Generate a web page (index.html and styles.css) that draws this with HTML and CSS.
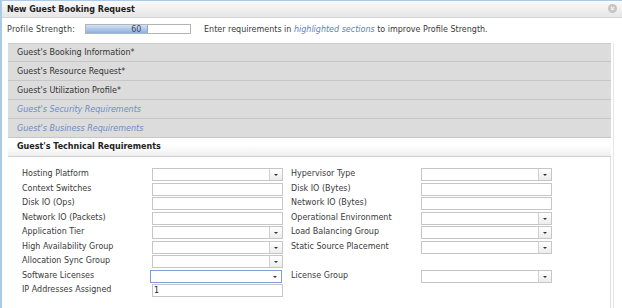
FILE: index.html
```html
<!DOCTYPE html>
<html>
<head>
<meta charset="utf-8">
<link rel="stylesheet" href="styles.css">
</head>
<body>
<div class="dialog">
  <div class="titlebar">
    <span class="title">New Guest Booking Request</span>
    <span class="close"><svg width="9" height="9" viewBox="0 0 9 9"><circle cx="4.5" cy="4.5" r="4.5" fill="#c4c4c4"/><path d="M2.8 2.8 L6.2 6.2 M6.2 2.8 L2.8 6.2" stroke="#f4f4f4" stroke-width="1.2"/></svg></span>
  </div>
  <div class="strength">
    <span class="strength-label">Profile Strength:</span>
    <div class="meter"><div class="meter-fill" style="width:60%">60</div></div>
    <span class="hint">Enter requirements in <em>highlighted sections</em> to improve Profile Strength.</span>
  </div>
  <div class="accordion">
    <div class="acc-head">Guest's Booking Information*</div>
    <div class="acc-head">Guest's Resource Request*</div>
    <div class="acc-head">Guest's Utilization Profile*</div>
    <div class="acc-head hl">Guest's Security Requirements</div>
    <div class="acc-head hl">Guest's Business Requirements</div>
    <div class="acc-head active">Guest's Technical Requirements</div>
    <div class="acc-body">
      <div class="form">
        <label>Hosting Platform</label><div class="select"><span class="arrow"></span></div>
        <label>Hypervisor Type</label><div class="select"><span class="arrow"></span></div>

        <label>Context Switches</label><div class="input"></div>
        <label>Disk IO (Bytes)</label><div class="input"></div>

        <label>Disk IO (Ops)</label><div class="input"></div>
        <label>Network IO (Bytes)</label><div class="input"></div>

        <label>Network IO (Packets)</label><div class="input"></div>
        <label>Operational Environment</label><div class="select"><span class="arrow"></span></div>

        <label>Application Tier</label><div class="select"><span class="arrow"></span></div>
        <label>Load Balancing Group</label><div class="select"><span class="arrow"></span></div>

        <label>High Availability Group</label><div class="select"><span class="arrow"></span></div>
        <label>Static Source Placement</label><div class="select"><span class="arrow"></span></div>

        <label>Allocation Sync Group</label><div class="select"><span class="arrow"></span></div>
        <label></label><div></div>

        <label class="gap">Software Licenses</label><div class="select focus gap"><span class="arrow"></span></div>
        <label class="gap">License Group</label><div class="select gap"><span class="arrow"></span></div>

        <label>IP Addresses Assigned</label><div class="input">1</div>
        <label></label><div></div>
      </div>
    </div>
  </div>
</div>
</body>
</html>
```
FILE: styles.css
```css
html, body {
  margin: 0;
  padding: 0;
  background: #fff;
}
body {
  font-family: "DejaVu Sans", Verdana, sans-serif;
  font-size: 8px;
  color: #3a3a3a;
  width: 622px;
  height: 308px;
  overflow: hidden;
}
.dialog {
  height: 307px;
  border-top: 1px solid #a9cbe6;
  border-left: 2px solid #a9cbe6;
  display: flex;
  flex-direction: column;
}
.titlebar {
  height: 16px;
  display: flex;
  align-items: center;
  justify-content: space-between;
  padding: 0 5px 0 5px;
  background: linear-gradient(#fafafa, #e6e6e6);
  border-bottom: 1px solid #d6d6d6;
}
.title {
  font-weight: bold;
  color: #222;
}
.close {
  display: flex;
  margin-top: -2px;
}
.strength {
  height: 22px;
  display: flex;
  align-items: center;
  padding-left: 5px;
  flex-shrink: 0;
}
.strength-label {
  width: 78px;
  letter-spacing: 0.2px;
}
.meter {
  width: 104px;
  height: 8px;
  border: 1px solid #b4b4b4;
  background: #fff;
}
.meter-fill {
  height: 8px;
  background: linear-gradient(#d3e2f5, #8fb0de);
  border-right: 1px solid #8aa8d4;
  box-sizing: border-box;
  text-align: right;
  padding-right: 6px;
  line-height: 9px;
  color: #3a4a66;
}
.hint {
  margin-left: 13px;
}
.hint em {
  color: #5b80c0;
}
.accordion {
  margin: 3px 11px 0 6px;
  flex: 1;
  display: flex;
  flex-direction: column;
  box-shadow: 2px 0 0 #fff, 3px 0 0 #e6e6e6;
}
.acc-head {
  height: 18px;
  line-height: 19px;
  padding-left: 9px;
  background: #dcdcdc;
  border-bottom: 1px solid #c6c6c6;
  color: #333;
}
.acc-head:first-child {
  border-top: 1px solid #cfcfcf;
  height: 17px;
  line-height: 18px;
}
.acc-head.hl {
  color: #6c8dc4;
  font-style: italic;
}
.acc-head.active {
  background: linear-gradient(#fff 40%, #efefef);
  font-weight: bold;
  color: #222;
  line-height: 17px;
  border-bottom: 1px solid #cfcfcf;
}
.acc-body {
  flex: 1;
  padding: 11px 0 0 14px;
  border-right: 1px solid #e0e0e0;
}
.form {
  display: grid;
  grid-template-columns: 130px 131px 138px 131px;
  grid-auto-rows: 13px;
  row-gap: 1.5px;
}
.form label {
  line-height: 12px;
  color: #3a3a3a;
}
.form > label:nth-child(4n+3) {
  padding-left: 8px;
}
.input, .select {
  border: 1px solid #c6c6c6;
  height: 11px;
  background: #fff;
  box-sizing: content-box;
  position: relative;
  line-height: 11px;
  padding-left: 1px;
  color: #222;
}
.select .arrow {
  position: absolute;
  right: 0;
  top: 0;
  width: 12px;
  height: 11px;
  border-left: 1px solid #d0d0d0;
  background: linear-gradient(#fff, #ececec);
}
.select .arrow::after {
  content: "";
  position: absolute;
  left: 4px;
  top: 5px;
  border-left: 2px solid transparent;
  border-right: 2px solid transparent;
  border-top: 2px solid #333;
}
.select.focus {
  border-color: #7f9ed1;
  margin-left: -2px;
  margin-right: 1px;
}
.select.focus .arrow {
  border-left: none;
  background: none;
}
.gap {
  margin-top: 0.5px;
}
```
